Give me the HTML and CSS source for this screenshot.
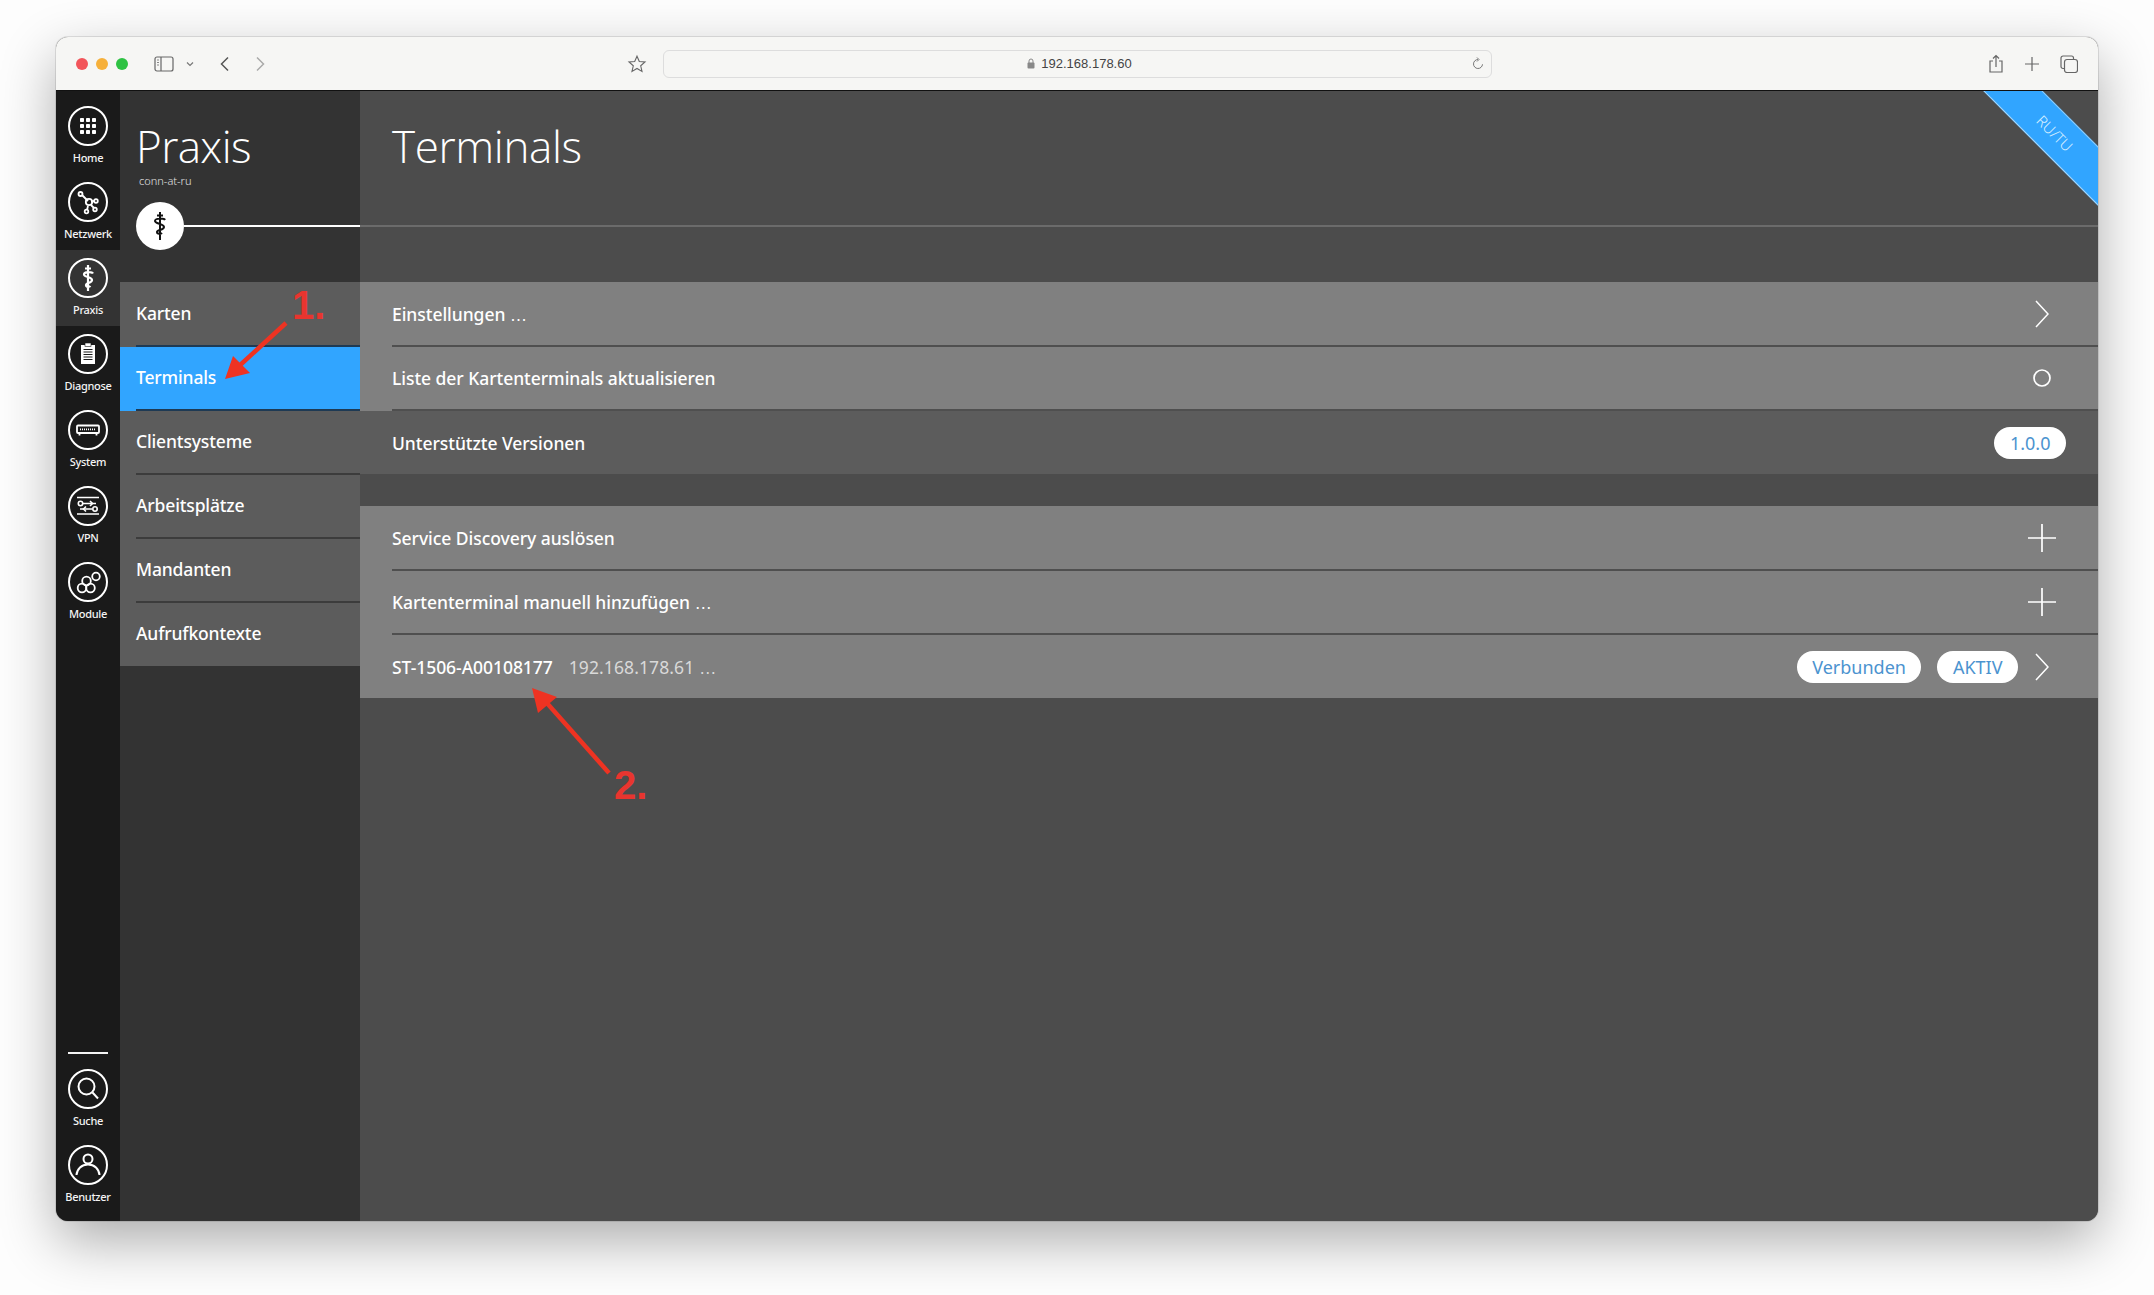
FILE: index.html
```html
<!DOCTYPE html>
<html lang="de">
<head>
<meta charset="utf-8">
<title>Terminals</title>
<link rel="stylesheet" href="styles.css">
</head>
<body>
<div class="window">
  <header class="toolbar">
    <div class="lights"><i class="light red"></i><i class="light yellow"></i><i class="light green"></i></div>
    <svg class="tb-sidebar" width="20" height="16" viewBox="0 0 20 16"><rect x="1" y="1" width="18" height="14" rx="2" fill="none" stroke="#666" stroke-width="1.2"/><path d="M7 1v14" stroke="#666" stroke-width="1.2"/><path d="M3 4h2M3 6.5h2M3 9h2" stroke="#888" stroke-width="1"/></svg>
    <svg class="tb-caret" width="8" height="6" viewBox="0 0 8 6"><path d="M1 1.5l3 3 3-3" fill="none" stroke="#777" stroke-width="1.2"/></svg>
    <svg class="tb-back" width="12" height="16" viewBox="0 0 12 16"><path d="M9 1.5L2.5 8 9 14.5" fill="none" stroke="#555" stroke-width="1.5"/></svg>
    <svg class="tb-forward" width="12" height="16" viewBox="0 0 12 16"><path d="M3 1.5L9.5 8 3 14.5" fill="none" stroke="#aaa" stroke-width="1.5"/></svg>
    <svg class="tb-star" width="20" height="20" viewBox="0 0 20 20"><path d="M10 2.2l2.3 5.3 5.7.5-4.3 3.8 1.3 5.6L10 14.5l-5 2.9 1.3-5.6L2 8l5.7-.5z" fill="none" stroke="#666" stroke-width="1.1"/></svg>
    <div class="address">
      <span class="address-text"><svg class="lock" width="8" height="11" viewBox="0 0 8 11"><path d="M2 5V3a2 2 0 0 1 4 0v2" fill="none" stroke="#888" stroke-width="1"/><rect x="0.5" y="4.5" width="7" height="6" rx="1" fill="#888"/></svg>192.168.178.60</span>
      <svg class="reload" width="12" height="14" viewBox="0 0 12 14"><path d="M6 2.5a4.5 4.5 0 1 0 4.5 4.8" fill="none" stroke="#777" stroke-width="1"/><path d="M5 0.5L7 2.5 5 4.5" fill="none" stroke="#777" stroke-width="1"/></svg>
    </div>
    <div class="tb-right">
      <svg width="16" height="20" viewBox="0 0 16 20"><path d="M5 7H2v11h12V7h-3M8 13V2M5 4.5L8 1.5l3 3" fill="none" stroke="#666" stroke-width="1.2"/></svg>
      <svg width="14" height="14" viewBox="0 0 14 14"><path d="M7 0v14M0 7h14" stroke="#666" stroke-width="1.2"/></svg>
      <svg width="18" height="18" viewBox="0 0 18 18"><rect x="4.5" y="4.5" width="13" height="13" rx="2.5" fill="none" stroke="#666" stroke-width="1.2"/><path d="M4 13.5H3A2 2 0 0 1 1 11.500V3a2 2 0 0 1 2-2h8.500a2 2 0 0 1 2 2v1" fill="none" stroke="#666" stroke-width="1.2"/></svg>
    </div>
  </header>
  <div class="app">
    <nav class="rail">
      <a class="rail-item"><svg class="rail-icon" viewBox="0 0 40 40"><circle cx="20" cy="20" r="19" class="ring"/><g fill="#fff"><rect x="12" y="12" width="4" height="4" rx=".8"/><rect x="18" y="12" width="4" height="4" rx=".8"/><rect x="24" y="12" width="4" height="4" rx=".8"/><rect x="12" y="18" width="4" height="4" rx=".8"/><rect x="18" y="18" width="4" height="4" rx=".8"/><rect x="24" y="18" width="4" height="4" rx=".8"/><rect x="12" y="24" width="4" height="4" rx=".8"/><rect x="18" y="24" width="4" height="4" rx=".8"/><rect x="24" y="24" width="4" height="4" rx=".8"/></g></svg><span>Home</span></a>
      <a class="rail-item"><svg class="rail-icon" viewBox="0 0 40 40"><circle cx="20" cy="20" r="19" class="ring"/><g fill="none" stroke="#fff" stroke-width="1.8"><path d="M14 13l6 6M23 19.500l4-.5M23 23l3 3M20 24l-1 4"/><circle cx="21" cy="20" r="3.200"/><circle cx="12.500" cy="12" r="2"/><circle cx="28" cy="19" r="1.800"/><circle cx="27" cy="27.500" r="1.800"/><circle cx="18.500" cy="29.500" r="1.800"/></g></svg><span>Netzwerk</span></a>
      <a class="rail-item active"><svg class="rail-icon" viewBox="0 0 40 40"><circle cx="20" cy="20" r="19" class="ring"/><path d="M20 7v26M17 10.500h6M25 15.500c-1-2-9-2-9 1s8 2 8 5.500-6 2.500-6 5 3.500 2 4.500 1" fill="none" stroke="#fff" stroke-width="2.200"/></svg><span>Praxis</span></a>
      <a class="rail-item"><svg class="rail-icon" viewBox="0 0 40 40"><circle cx="20" cy="20" r="19" class="ring"/><rect x="13" y="11" width="14" height="19" fill="#fff"/><rect x="17" y="9" width="6" height="3.500" fill="#fff" stroke="#1a1a1a" stroke-width=".6"/><path d="M15.500 15.500h9M15.500 18h9M15.500 20.500h9M15.500 23h9M15.500 25.500h9" stroke="#1a1a1a" stroke-width="1.100"/></svg><span>Diagnose</span></a>
      <a class="rail-item"><svg class="rail-icon" viewBox="0 0 40 40"><circle cx="20" cy="20" r="19" class="ring"/><rect x="9" y="15.500" width="22" height="7.500" rx="1" fill="none" stroke="#fff" stroke-width="1.800"/><path d="M12 19.300h16" stroke="#fff" stroke-width="1.800" stroke-dasharray="1 1"/><path d="M11.500 24v1.500M28.500 24v1.500" stroke="#fff" stroke-width="1.800"/></svg><span>System</span></a>
      <a class="rail-item"><svg class="rail-icon" viewBox="0 0 40 40"><circle cx="20" cy="20" r="19" class="ring"/><g fill="none" stroke="#fff" stroke-width="1.600"><path d="M9 11.500h22M9 28h22M15 17.500h13M12 23h12"/><circle cx="12.500" cy="17.500" r="2.200"/><circle cx="27" cy="23" r="2.200"/><path d="M22 15l2.500 2.500L22 20M18 20.500L15.500 23l2.500 2.500"/></g></svg><span>VPN</span></a>
      <a class="rail-item"><svg class="rail-icon" viewBox="0 0 40 40"><circle cx="20" cy="20" r="19" class="ring"/><g fill="none" stroke="#fff" stroke-width="1.800"><circle cx="14" cy="26" r="4.300"/><circle cx="22.500" cy="26" r="4.300"/><circle cx="18.500" cy="19" r="4.300"/><circle cx="28" cy="14.500" r="3.800"/></g></svg><span>Module</span></a>
      <div class="rail-spacer"></div>
      <hr class="rail-divider">
      <a class="rail-item"><svg class="rail-icon" viewBox="0 0 40 40"><circle cx="20" cy="20" r="19" class="ring"/><circle cx="18.500" cy="17.500" r="8" fill="none" stroke="#fff" stroke-width="2"/><path d="M24.500 23.500L30 29.500" stroke="#fff" stroke-width="2"/></svg><span>Suche</span></a>
      <a class="rail-item"><svg class="rail-icon" viewBox="0 0 40 40"><circle cx="20" cy="20" r="19" class="ring"/><circle cx="20" cy="14" r="4.500" fill="none" stroke="#fff" stroke-width="2"/><path d="M8.500 30c.5-6 5-10.500 11.500-10.500S31 24 31.500 30" fill="none" stroke="#fff" stroke-width="2"/></svg><span>Benutzer</span></a>
    </nav>
    <aside class="side">
      <div class="side-head">
        <h1 class="side-title">Praxis</h1>
        <div class="side-sub">conn-at-ru</div>
        <div class="side-medal">
          <span class="medal"><svg width="26" height="32" viewBox="0 0 26 32"><path d="M13 2v28M10 5.500h6M18 10c-1-2-10-2-10 1s9 2.500 9 6-7 2.500-7 5 4 2 5 1" fill="none" stroke="#111" stroke-width="2"/></svg></span>
          <span class="medal-line"></span>
        </div>
      </div>
      <ul class="side-list">
        <li class="side-row navy"><span>Karten</span></li>
        <li class="side-row current navy"><span>Terminals</span></li>
        <li class="side-row"><span>Clientsysteme</span></li>
        <li class="side-row"><span>Arbeitsplätze</span></li>
        <li class="side-row"><span>Mandanten</span></li>
        <li class="side-row last"><span>Aufrufkontexte</span></li>
      </ul>
    </aside>
    <main class="main">
      <div class="ribbon">RU/TU</div>
      <div class="main-head"><h2 class="main-title">Terminals</h2></div>
      <section class="group">
        <div class="row"><div class="row-in"><span class="row-text">Einstellungen <span class="dots">…</span></span><span class="slot"><svg width="14" height="28" viewBox="0 0 14 28"><path d="M1 1l12 13L1 27" fill="none" stroke="#fff" stroke-width="1.500"/></svg></span></div></div>
        <div class="row"><div class="row-in"><span class="row-text">Liste der Kartenterminals aktualisieren</span><span class="slot"><svg width="18" height="18" viewBox="0 0 18 18"><circle cx="9" cy="9" r="8" fill="none" stroke="#fff" stroke-width="1.700"/></svg></span></div></div>
        <div class="row dark"><div class="row-in last"><span class="row-text">Unterstützte Versionen</span><span class="pill">1.0.0</span></div></div>
      </section>
      <section class="group">
        <div class="row"><div class="row-in"><span class="row-text">Service Discovery auslösen</span><span class="slot"><svg width="28" height="28" viewBox="0 0 28 28"><path d="M14 0v28M0 14h28" stroke="#fff" stroke-width="1.700"/></svg></span></div></div>
        <div class="row"><div class="row-in"><span class="row-text">Kartenterminal manuell hinzufügen <span class="dots">…</span></span><span class="slot"><svg width="28" height="28" viewBox="0 0 28 28"><path d="M14 0v28M0 14h28" stroke="#fff" stroke-width="1.700"/></svg></span></div></div>
        <div class="row"><div class="row-in last"><span class="row-text">ST-1506-A00108177</span><span class="row-sub">192.168.178.61 <span class="dots">…</span></span><span class="row-fill"></span><span class="pill">Verbunden</span><span class="pill second">AKTIV</span><span class="slot"><svg width="14" height="28" viewBox="0 0 14 28"><path d="M1 1l12 13L1 27" fill="none" stroke="#fff" stroke-width="1.500"/></svg></span></div></div>
      </section>
    </main>
  </div>
  <svg class="arrows" width="2042" height="1184" viewBox="56 37 2042 1184">
    <path d="M286 323L238 367" stroke="#ee3322" stroke-width="4.500" fill="none"/>
    <path d="M225 379L233 356L250 373Z" fill="#ee3322"/>
    <path d="M609 773L546 702" stroke="#ee3322" stroke-width="4.500" fill="none"/>
    <path d="M532 688L557 697L538 713Z" fill="#ee3322"/>
  </svg>
  <span class="note note-one">1.</span>
  <span class="note note-two">2.</span>
</div>
</body>
</html>
```
FILE: styles.css
```css
* { box-sizing: border-box; }
html, body { margin: 0; padding: 0; }
body {
  width: 2154px;
  height: 1295px;
  padding: 37px 56px 74px;
  background: #fdfdfd;
  font-family: "Noto Sans", sans-serif;
  overflow: hidden;
}
.window {
  position: relative;
  height: 1184px;
  display: flex;
  flex-direction: column;
  border-radius: 12px;
  background: #4c4c4c;
  box-shadow: 0 20px 55px rgba(0, 0, 0, 0.32), 0 0 0 1px rgba(0, 0, 0, 0.1);
}
.toolbar {
  height: 54px;
  flex: none;
  display: flex;
  align-items: center;
  padding: 0 20px;
  background: #f6f6f4;
  border-bottom: 1px solid #111;
  border-radius: 12px 12px 0 0;
}
.lights { display: flex; gap: 8px; }
.light { width: 12px; height: 12px; border-radius: 50%; }
.red { background: #f2555a; }
.yellow { background: #f6b03a; }
.green { background: #2ec243; }
.tb-sidebar { margin-left: 26px; }
.tb-caret { margin-left: 12px; }
.tb-back { margin-left: 25px; }
.tb-forward { margin-left: 23px; }
.tb-star { margin-left: 361px; }
.address {
  position: relative;
  width: 829px;
  height: 28px;
  margin-left: 16px;
  padding-left: 4px;
  display: flex;
  align-items: center;
  justify-content: center;
  background: #f6f6f4;
  border: 1px solid #ddd;
  border-radius: 6px;
}
.address-text {
  display: flex;
  align-items: center;
  gap: 6px;
  font: 13px "Liberation Sans", sans-serif;
  color: #444;
}
.lock { flex: none; }
.reload { position: absolute; right: 7px; top: 6px; }
.tb-right {
  margin-left: auto;
  display: flex;
  align-items: center;
  gap: 21px;
}
.app { flex: 1; min-height: 0; display: flex; }
.rail {
  width: 64px;
  flex: none;
  display: flex;
  flex-direction: column;
  padding: 7px 0 8px;
  background: #1a1a1a;
  border-radius: 0 0 0 12px;
}
.rail-item {
  height: 76px;
  flex: none;
  padding-top: 8px;
  display: flex;
  flex-direction: column;
  align-items: center;
  color: #f4f4f4;
  font-size: 11px;
  letter-spacing: -0.3px;
  line-height: 16px;
  font-weight: 500;
}
.rail-item span { margin-top: 4px; white-space: nowrap; }
.rail-item.active { background: #333; }
.rail-icon { width: 40px; height: 40px; display: block; }
.ring { fill: none; stroke: #fff; stroke-width: 2; }
.rail-spacer { flex: 1; }
.rail-divider {
  width: 40px;
  height: 2px;
  margin: 0 auto 7px;
  border: 0;
  background: #f4f4f4;
}
.side {
  width: 240px;
  flex: none;
  background: #333;
}
.side-head { height: 191px; padding-top: 28px; }
.side-title {
  margin: 0 0 0 16px;
  font-size: 44px;
  letter-spacing: -0.6px;
  line-height: 54px;
  font-weight: 300;
  color: #fff;
  font-family: "Open Sans", sans-serif;
}
.side-sub {
  margin: 0 0 0 19px;
  font-size: 11px;
  line-height: 15px;
  font-weight: 300;
  color: #e4e4e4;
}
.side-medal {
  display: flex;
  align-items: center;
  margin: 14px 0 0 16px;
}
.medal {
  width: 48px;
  height: 48px;
  flex: none;
  display: flex;
  align-items: center;
  justify-content: center;
  border-radius: 50%;
  background: #fff;
}
.medal-line { flex: 1; height: 2px; background: #fff; }
.side-list { margin: 0; padding: 0; list-style: none; }
.side-row {
  height: 64px;
  background: #5c5c5c;
  padding-left: 16px;
  color: #fff;
  font-size: 17.5px;
  letter-spacing: -0.15px;
  font-weight: 500;
}
.side-row:first-child { height: 65px; padding-top: 1px; }
.side-row span {
  display: block;
  height: 64px;
  line-height: 61px;
  border-bottom: 2px solid #3c3c3c;
}
.side-row.navy span { border-bottom-color: #1e3a54; }
.side-row.last { height: 63px; }
.side-row.last span { height: 63px; border-bottom: 0; }
.side-row.current { background: #31a5ff; }
.main {
  position: relative;
  flex: 1;
  min-width: 0;
  overflow: hidden;
  background: #4c4c4c;
  border-radius: 0 0 12px 0;
}
.ribbon {
  position: absolute;
  left: 1595px;
  top: 21px;
  width: 200px;
  height: 42px;
  transform: rotate(45deg);
  background: #31a5ff;
  border-top: 1px solid #8fcdfb;
  border-bottom: 1px solid #a9d8fb;
  color: #d6eeff;
  font-size: 15px;
  line-height: 40px;
  font-weight: 300;
  text-align: center;
}
.main-head {
  height: 136px;
  margin-bottom: 55px;
  padding: 28px 0 0 32px;
  border-bottom: 2px solid #6b6b6b;
}
.main-title {
  margin: 0;
  font-size: 44px;
  letter-spacing: -0.35px;
  line-height: 54px;
  font-weight: 300;
  color: #fff;
  font-family: "Open Sans", sans-serif;
}
.group { margin-bottom: 32px; }
.row { height: 64px; background: #808080; padding-left: 32px; }
.row:first-child { height: 65px; padding-top: 1px; }
.row:last-child { height: 63px; }
.row.dark { background: #5c5c5c; }
.row-in {
  height: 64px;
  padding-right: 32px;
  display: flex;
  align-items: center;
  border-bottom: 2px solid #4f4f4f;
}
.row-in.last { height: 63px; border-bottom: 0; }
.row-text { color: #fff; font-size: 17.5px; letter-spacing: -0.05px; font-weight: 500; }
.row-sub { margin-left: 16px; color: #d9d9d9; font-size: 17.5px; letter-spacing: 0.1px; }
.dots { font-family: "Liberation Sans", sans-serif; }
.row-fill { flex: 1; }
.row-in:not(:has(.row-fill)) { justify-content: space-between; }
.slot {
  width: 48px;
  height: 28px;
  flex: none;
  display: flex;
  align-items: center;
  justify-content: center;
}
.pill {
  height: 32px;
  padding: 0 15.5px;
  display: flex;
  align-items: center;
  border-radius: 16px;
  background: #fff;
  color: #4b93cf;
  font-size: 18px;
}
.pill.second { margin-left: 16px; }
.arrows { position: absolute; left: 0; top: 0; pointer-events: none; }
.note {
  position: absolute;
  font: bold 40px/46px "Liberation Sans", sans-serif;
  color: #e8352f;
}
.note-one { left: 236px; top: 245px; }
.note-two { left: 558px; top: 725px; }
```
